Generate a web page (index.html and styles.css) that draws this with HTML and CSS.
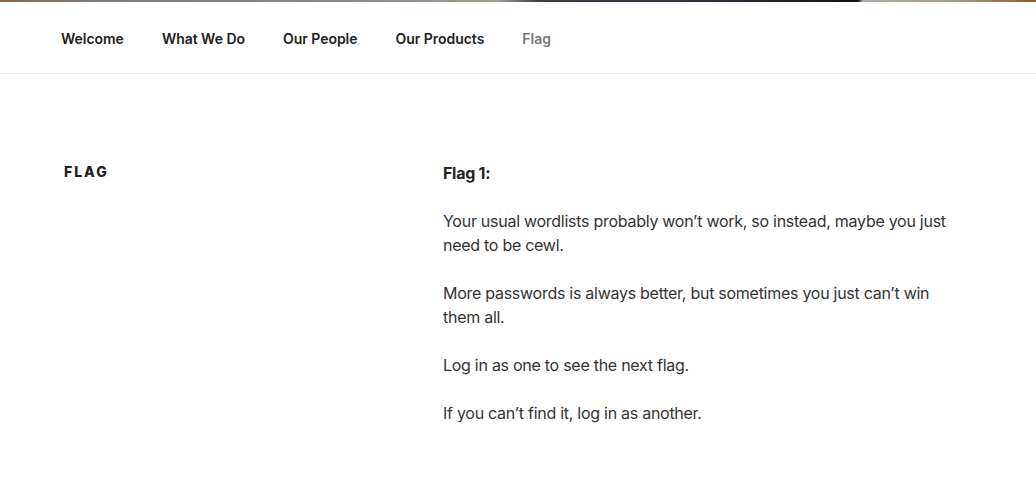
FILE: index.html
```html
<!DOCTYPE html>
<html lang="en">
<head>
<meta charset="utf-8">
<title>Flag</title>
<link rel="stylesheet" href="styles.css">
</head>
<body>
<div class="strip"></div>
<nav class="topnav">
  <ul class="menu">
    <li><a href="#">Welcome</a></li>
    <li><a href="#">What We Do</a></li>
    <li><a href="#">Our People</a></li>
    <li><a href="#">Our Products</a></li>
    <li class="current"><a href="#">Flag</a></li>
  </ul>
</nav>
<main class="content">
  <div class="wrap">
    <header class="entry-header">
      <h1 class="entry-title">Flag</h1>
    </header>
    <div class="entry-content">
      <p><strong>Flag 1:</strong></p>
      <p>Your usual wordlists probably won’t work, so instead, maybe you just need to be cewl.</p>
      <p>More passwords is always better, but sometimes you just can’t win them all.</p>
      <p>Log in as one to see the next flag.</p>
      <p>If you can’t find it, log in as another.</p>
    </div>
  </div>
</main>
</body>
</html>
```
FILE: styles.css
```css
* { box-sizing: border-box; }
html, body { margin: 0; padding: 0; }
body {
  background: #fff;
  color: #333;
  font-family: Inter, "Liberation Sans", sans-serif;
  font-size: 16px;
  line-height: 1.5;
}
.strip {
  height: 2px;
  background: linear-gradient(to right, #8b6a48 0%, #7b7a7e 10%, #8a8784 30%, #a39d8c 48%, #3a3f48 52%, #2a303a 70%, #101114 82.8%, #b2ada3 83.3%, #a89c86 92%, #8a5c34 100%);
}
.topnav {
  height: 72px;
  padding-top: 2px;
  border-bottom: 1px solid #eee;
  display: flex;
  align-items: center;
  padding-left: 44px;
}
.menu {
  list-style: none;
  margin: 0;
  padding: 0;
  display: flex;
}
.menu li a {
  display: block;
  padding: 0 17px;
  margin-right: 4px;
  font-size: 14px;
  font-weight: 600;
  color: #222;
  text-decoration: none;
  line-height: 20px;
  letter-spacing: -0.03px;
}
.menu li.current a { color: #767676; }
.content { padding-top: 87px; }
.wrap {
  max-width: 1000px;
  margin: 0 auto;
  padding: 0 49px 0 46px;
  display: grid;
  grid-template-columns: 1fr 526px;
  align-items: start;
}
.entry-title {
  margin: 0;
  padding-top: 1px;
  font-size: 14px;
  font-weight: 800;
  letter-spacing: 0.14em;
  text-transform: uppercase;
  color: #222;
  line-height: 1.4;
}
.entry-content { letter-spacing: -0.27px; }
.entry-content p { margin: 0 0 24px; }
.entry-content strong { font-weight: 700; color: #222; }
```
